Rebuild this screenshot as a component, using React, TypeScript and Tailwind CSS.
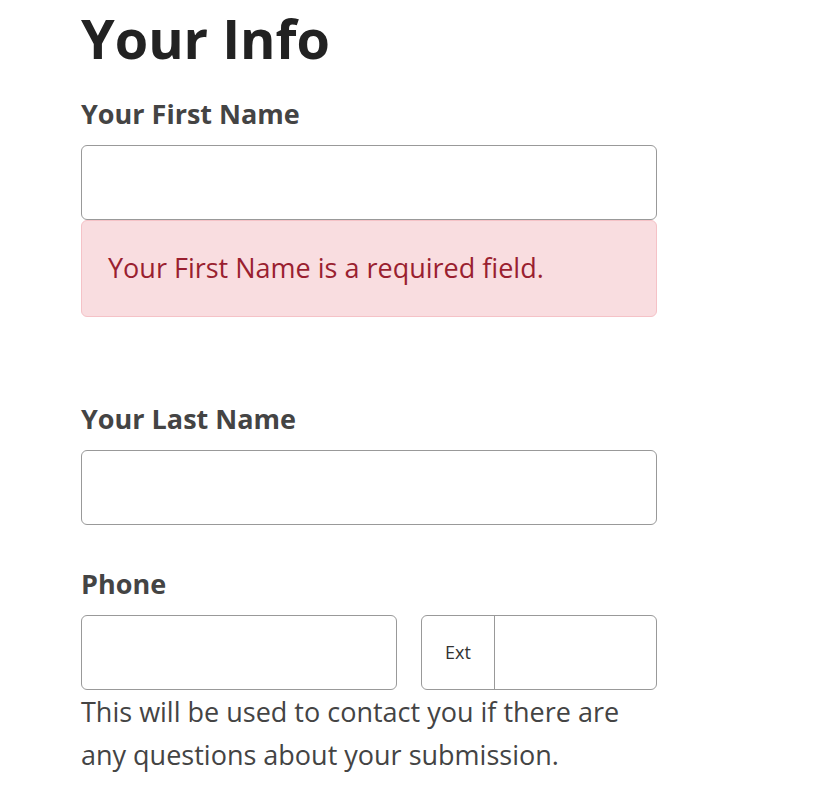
export default function App() {
  const font = { fontFamily: '"Open Sans", "Noto Sans", sans-serif' };
  return (
    <div className="min-h-[800px] bg-white" style={font}>
      <div className="w-[576px] ml-[81px]">
        <h1 className="text-[54px] leading-[76px] font-bold text-[#222] mt-0">Your Info</h1>
        <label className="block text-[27px] leading-[36px] font-bold text-[#444] mt-[20px]">Your First Name</label>
        <div className="mt-[13px] h-[75px] rounded-[6px] border border-[#999] bg-white"></div>
        <div className="h-[97px] rounded-[6px] border border-[#f5c2c7] bg-[#f9dde0] flex items-center px-[26px]">
          <span className="text-[27px] text-[#9a1f30]">Your First Name is a required field.</span>
        </div>
        <label className="block text-[27px] leading-[36px] font-bold text-[#444] mt-[84px]">Your Last Name</label>
        <div className="mt-[13px] h-[75px] rounded-[6px] border border-[#999] bg-white"></div>
        <label className="block text-[27px] leading-[36px] font-bold text-[#444] mt-[41px]">Phone</label>
        <div className="mt-[13px] flex gap-[24px]">
          <div className="w-[316px] h-[75px] rounded-[6px] border border-[#999] bg-white"></div>
          <div className="flex-1 h-[75px] rounded-[6px] border border-[#999] bg-white flex">
            <div className="w-[73px] border-r border-[#999] flex items-center justify-center text-[18px] text-[#333]">Ext</div>
            <div className="flex-1"></div>
          </div>
        </div>
        <p className="text-[27px] leading-[43px] text-[#444] w-[576px]">
          This will be used to contact you if there are any questions about your submission.
        </p>
      </div>
    </div>
  );
}
